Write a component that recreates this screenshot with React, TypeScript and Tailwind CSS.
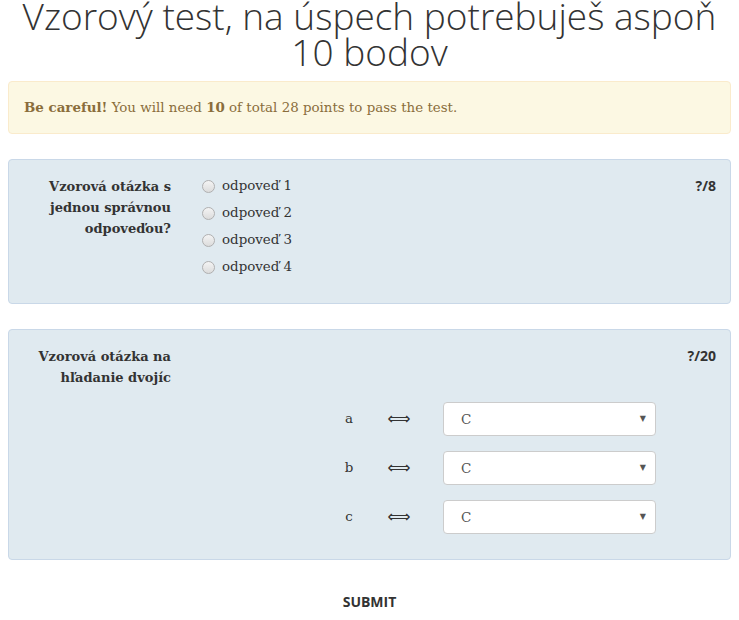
import React from "react";

const serif = "font-['DejaVu_Serif',serif]";

function Score({ value }: { value: string }) {
  return (
    <div className="ml-auto text-[14px] font-bold text-[#333] leading-[20px] font-['Open_Sans',sans-serif]">
      {value}
    </div>
  );
}

function Arrow() {
  return <span className="text-[16px] text-[#333] font-['DejaVu_Sans',sans-serif]">⟺</span>;
}

function Select({ value }: { value: string }) {
  return (
    <div className="flex h-[34px] w-[213px] items-center justify-between rounded-[4px] border border-[#ccc] bg-white pl-[17px] pr-[9px] text-[13.5px] text-[#555]">
      <span>{value}</span>
      <span className="text-[8px] text-[#555]">▼</span>
    </div>
  );
}

export default function App() {
  const answers = ["odpoveď 1", "odpoveď 2", "odpoveď 3", "odpoveď 4"];
  const pairs = ["a", "b", "c"];

  return (
    <main className={`min-h-[620px] bg-white px-[8px] text-[#333] ${serif}`}>
      <h1 className="-mt-[2px] text-center text-[37px] font-light leading-[36px] text-[#333] font-['Open_Sans',sans-serif]">
        Vzorový test, na úspech potrebuješ aspoň 10 bodov
      </h1>

      <div className="mt-[11px] rounded-[4px] border border-[#faebcc] bg-[#fcf8e3] px-[15px] py-[16px] text-[13.4px] leading-[19px] text-[#8a6d3b]">
        <strong>Be careful!</strong> You will need <strong>10</strong> of total 28 points to pass the test.
      </div>

      <section className="mt-[25px] flex rounded-[4px] border border-[#c9d8e8] bg-[#e0eaf0] pl-[15px] pr-[14px] pt-[16px] pb-[25px]">
        <div className="w-[147px] text-right text-[13px] font-bold leading-[21px]">
          Vzorová otázka s jednou správnou odpoveďou?
        </div>
        <div className="ml-[31px] flex flex-col gap-[6px]">
          {answers.map((a) => (
            <label key={a} className="flex h-[21px] items-center text-[13.4px]">
              <span className="mr-[7px] h-[13px] w-[13px] rounded-full border border-[#b0b0b0] bg-gradient-to-b from-[#f4f4f4] to-[#dcdcdc]" />
              {a}
            </label>
          ))}
        </div>
        <Score value="?/8" />
      </section>

      <section className="mt-[25px] rounded-[4px] border border-[#c9d8e8] bg-[#e0eaf0] pl-[15px] pr-[14px] pt-[16px] pb-[25px]">
        <div className="flex">
          <div className="w-[147px] text-right text-[13px] font-bold leading-[21px]">
            Vzorová otázka na hľadanie dvojíc
          </div>
          <Score value="?/20" />
        </div>
        <div className="mt-[14px] flex flex-col gap-[15px] pl-[305px]">
          {pairs.map((p) => (
            <div key={p} className="flex items-center text-[13.4px]">
              <span className="w-[40px] text-center">{p}</span>
              <span className="ml-[10px] w-[40px] text-center">
                <Arrow />
              </span>
              <span className="ml-[24px]">
                <Select value="C" />
              </span>
            </div>
          ))}
        </div>
      </section>

      <div className="mt-[30px] text-center">
        <button className="text-[14px] font-bold text-[#333] font-['Open_Sans',sans-serif]">SUBMIT</button>
      </div>
    </main>
  );
}
